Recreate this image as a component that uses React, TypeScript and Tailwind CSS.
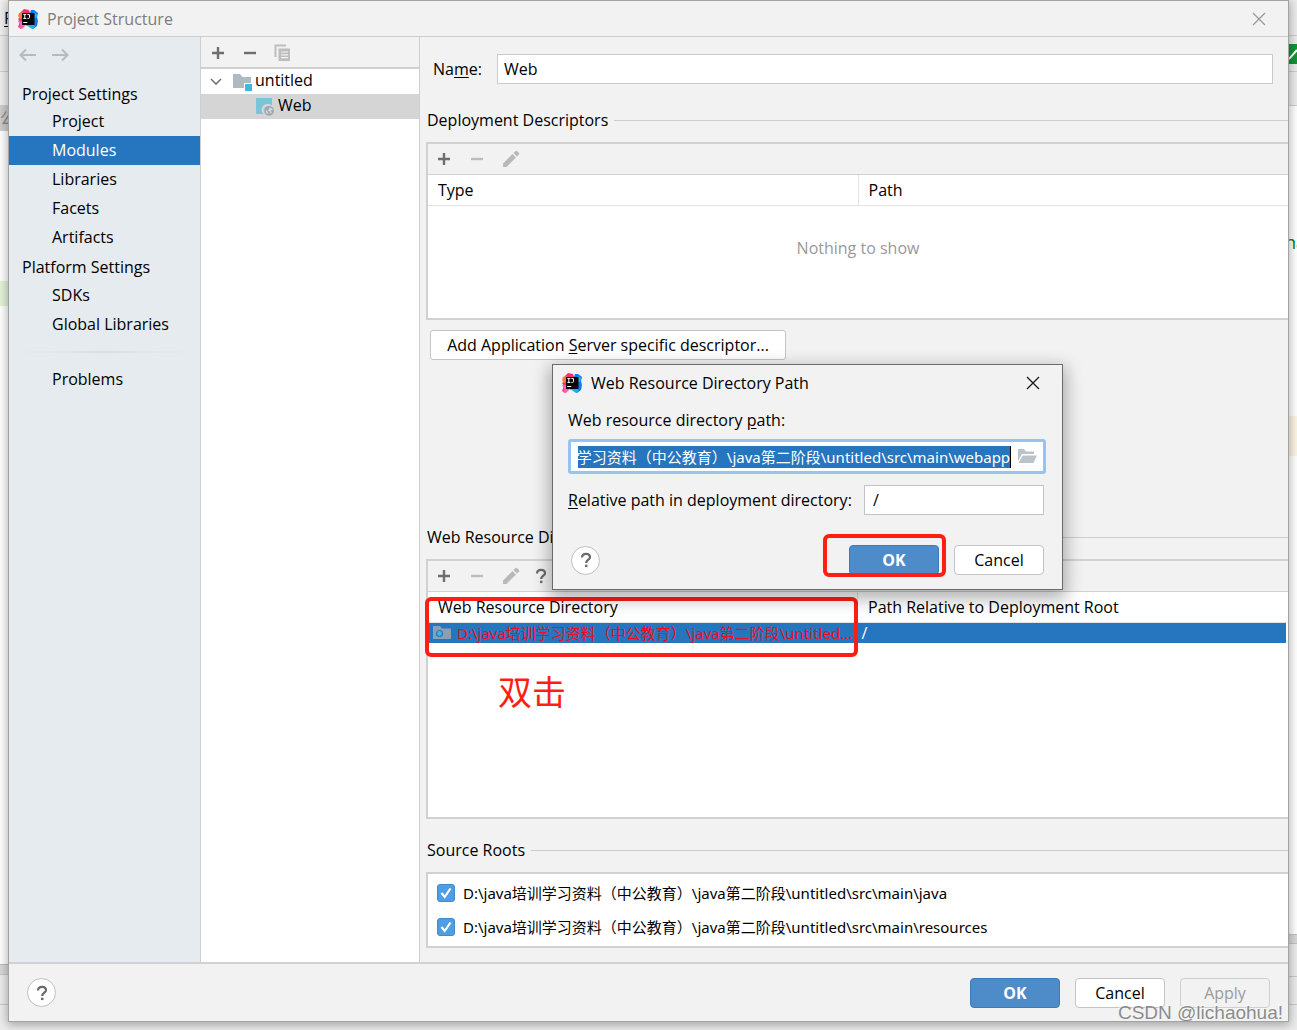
import { useEffect, useRef, type ReactNode } from "react";

const FONT = "font-['Open_Sans','Noto_Sans_CJK_SC',sans-serif]";
const PATH_FONT = "font-['Noto_Sans','Noto_Sans_CJK_SC',sans-serif]";

function Logo() {
  return (
    <svg width="20" height="20" viewBox="0 0 20 20" className="shrink-0" aria-hidden="true">
      <path d="M4 2l2-2 5 1 1 3-7 10-2 6-3-2 2-5-2-3 3-2-2-3z" fill="#fe2d72" />
      <path d="M1 4l4-1 1 5-4 2-2-3z" fill="#fb7a3c" />
      <path d="M0 12l4 0 3 5-3 3-3-1 1-3z" fill="#fd5fb0" />
      <path d="M13 1l3 0 4 3-1 4 1 4-1 5-4 3-4-3-5-1 3-3z" fill="#087cfa" />
      <path d="M16 3l3 2-1 4-2 0z" fill="#27b5f7" />
      <path d="M8 15.500l7 0 2 2-3 2.500-3-2z" fill="#14b4f1" />
      <rect x="4" y="4" width="12.500" height="12" fill="#0b0306" />
      <path d="M5.300 5.600h3M6.800 5.600v4M5.300 9.400h3M9.300 5.600h2.200v2.800q0 1-1 1h-1.200" stroke="#fff" strokeWidth="1" fill="none" />
      <path d="M5.300 13.500h4" stroke="#fff" strokeWidth="1" />
    </svg>
  );
}

function Plus() {
  return (
    <svg width="16" height="16" viewBox="0 0 16 16" aria-hidden="true">
      <path d="M8 2v12M2 8h12" stroke="#6e6e6e" strokeWidth="2.400" />
    </svg>
  );
}

function Minus({ off = false }: { off?: boolean }) {
  return (
    <svg width="16" height="16" viewBox="0 0 16 16" aria-hidden="true">
      <path d="M2 8h12" stroke={off ? "#bdbdbd" : "#6e6e6e"} strokeWidth="2.400" />
    </svg>
  );
}

function Pencil() {
  return (
    <svg width="18" height="18" viewBox="0 0 18 18" fill="#b9b9b9" aria-hidden="true">
      <path d="M1 13.500L10.500 4l3.500 3.500L4.500 17H1zM11.500 3l2-2q.7-.6 1.400 0l2.100 2.100q.6.7 0 1.400l-2 2z" />
    </svg>
  );
}

function Copy() {
  return (
    <svg width="18" height="18" viewBox="0 0 18 18" fill="none" aria-hidden="true">
      <path d="M1.500 13V1.500H12" stroke="#bdbdbd" strokeWidth="2" />
      <rect x="4.500" y="4.500" width="11.500" height="12.500" fill="#bdbdbd" />
      <path d="M7 8h7M7 10.800h7M7 13.600h7" stroke="#f2f2f2" strokeWidth="1.200" />
    </svg>
  );
}

function Question() {
  return (
    <svg width="16" height="16" viewBox="0 0 16 16" fill="none" aria-hidden="true">
      <path d="M4 5.500Q4 1.800 8 1.800T12 5.200C12 7.600 8.200 7.800 8.200 11" stroke="#6a6a6a" strokeWidth="2.200" />
      <rect x="7" y="12.700" width="2.400" height="2.400" fill="#6a6a6a" />
    </svg>
  );
}

function Close({ color }: { color: string }) {
  return (
    <svg width="14" height="14" viewBox="0 0 14 14" aria-hidden="true">
      <path d="M1 1l12 12M13 1L1 13" stroke={color} strokeWidth="1.300" />
    </svg>
  );
}

function Arrow({ right = false }: { right?: boolean }) {
  return (
    <svg width="17" height="14" viewBox="0 0 17 14" fill="none" aria-hidden="true">
      <path
        d={right ? "M0 7h15M10 1.500L15.500 7 10 12.500" : "M17 7H2M7 1.500L1.500 7 7 12.500"}
        stroke="#b8babc"
        strokeWidth="2"
      />
    </svg>
  );
}

function ModuleFolder() {
  return (
    <svg width="20" height="18" viewBox="0 0 20 18" aria-hidden="true">
      <path d="M0 1h7l2.500 3H18v6h-7v5H0z" fill="#afb9c1" />
      <rect x="12" y="11" width="7" height="7" fill="#40b6e0" />
    </svg>
  );
}

function WebFacet() {
  return (
    <svg width="19" height="18" viewBox="0 0 19 18" aria-hidden="true">
      <path d="M0 0h16v7.500A6 6 0 0 0 7.300 16H0z" fill="#7ac4dc" />
      <circle cx="13" cy="12.800" r="4.900" fill="#9aa7b0" />
      <path d="M9.500 11.500l2 2 1 2.800-2.400-1zM13 9.500l3 .8 1 2-1.500-.3-1 1.500 1.500.5-1.500 2-1-2.500-2-1.500 1.500-1z" fill="#d5d5d5" />
    </svg>
  );
}

function WebFolder() {
  return (
    <svg width="18" height="15" viewBox="0 0 18 15" className="shrink-0" aria-hidden="true">
      <path d="M0 1h7l2 2.500h9V14H0z" fill="#8a9fb1" />
      <circle cx="6.500" cy="8.500" r="3" fill="#40b6e0" stroke="#2675bf" strokeWidth="1.200" />
    </svg>
  );
}

function OpenFolder() {
  return (
    <svg width="19" height="15" viewBox="0 0 19 15" fill="#bcc3c8" aria-hidden="true">
      <path d="M0 0h6l2 2.500h8V5H4L0 12z" />
      <path d="M4.700 6.500H19L15.500 14H.5z" />
    </svg>
  );
}

function HelpButton() {
  return (
    <button aria-label="Help" className="flex size-[29px] items-center justify-center rounded-full border border-[#bfbfbf] bg-white">
      <Question />
    </button>
  );
}

function PushButton({ children, kind = "plain" }: { children: ReactNode; kind?: "plain" | "primary" | "off" }) {
  const look = {
    plain: "border-[#c4c4c4] bg-white text-black",
    primary: "border-[#3f7ab8] bg-[#4e8bc9] font-bold text-white",
    off: "border-[#cfcfcf] bg-[#f2f2f2] text-[#9b9b9b]",
  }[kind];
  return (
    <button disabled={kind === "off"} className={`flex h-[30px] w-[90px] items-center justify-center rounded border ${look}`}>
      {children}
    </button>
  );
}

function NavItem({ children, active = false }: { children: ReactNode; active?: boolean }) {
  return (
    <a
      href="#"
      className={`flex h-[29px] items-center pb-0.5 pl-[43px] ${active ? "bg-[#2675bf] text-white" : "text-black"}`}
    >
      {children}
    </a>
  );
}

function SectionTitle({ children }: { children: ReactNode }) {
  return (
    <div className="flex h-6 items-center gap-1.5 pl-px">
      <h2 className="whitespace-nowrap">{children}</h2>
      <div className="h-px flex-1 bg-[#cdcdcd]" />
    </div>
  );
}

function Toolbar({ help = false }: { help?: boolean }) {
  return (
    <div className="flex h-[31px] items-center gap-[17px] border-b border-[#d1d1d1] bg-[#f2f2f2] pl-2">
      <button aria-label="Add"><Plus /></button>
      <button aria-label="Remove" disabled><Minus off /></button>
      <button aria-label="Edit" disabled><Pencil /></button>
      {help && <button aria-label="Help" className="-ml-1"><Question /></button>}
    </div>
  );
}

function SourceRoot({ path }: { path: string }) {
  return (
    <label className={`flex h-[34px] items-center gap-2 text-[15px] ${PATH_FONT}`}>
      <span className="relative flex size-[18px]">
        <input type="checkbox" defaultChecked className="size-[18px] appearance-none rounded-[3px] border border-[#4389cd] bg-[#4f9ee3]" />
        <svg width="18" height="18" viewBox="0 0 18 18" className="pointer-events-none absolute inset-0" aria-hidden="true">
          <path d="M4.500 9l3.200 4L13.500 4.500" stroke="#fff" strokeWidth="2.200" fill="none" />
        </svg>
      </span>
      {path}
    </label>
  );
}

function PathDialog() {
  const path = useRef<HTMLInputElement>(null);
  useEffect(() => {
    if (path.current) path.current.scrollLeft = path.current.scrollWidth;
  }, []);
  return (
    <section
      role="dialog"
      aria-label="Web Resource Directory Path"
      className="absolute top-[363px] left-[543px] w-[511px] border border-[#6b6b6b] bg-[#f2f2f2] pb-[14px] shadow-[0_6px_16px_3px_rgba(0,0,0,0.3)]"
    >
      <div className="flex h-9 items-center pr-[22px] pl-[9px]">
        <Logo />
        <h2 className="flex-1 pl-[9px]">Web Resource Directory Path</h2>
        <button aria-label="Close"><Close color="#1a1a1a" /></button>
      </div>
      <div className="pr-4 pl-[15px]">
        <label htmlFor="res-path" className="flex h-[38px] items-center whitespace-pre">
          Web resource directory <u className="underline-offset-2">p</u>ath:
        </label>
        <div className="flex h-[35px] items-center rounded-[3px] border-3 border-[#97c3f3] bg-white pr-[6px] pl-[7px]">
          <input
            id="res-path"
            ref={path}
            defaultValue="D:\java培训学习资料（中公教育）\java第二阶段\untitled\src\main\webapp"
            className={`h-[22px] min-w-0 flex-1 border-r border-black bg-[#2675bf] text-[15px] text-white outline-none ${PATH_FONT}`}
          />
          <button aria-label="Browse" className="ml-[7px]"><OpenFolder /></button>
        </div>
        <div className="mt-[11px] flex items-center justify-between pr-[2px]">
          <label htmlFor="rel-path"><u className="underline-offset-2">R</u>elative path in deployment directory:</label>
          <input id="rel-path" defaultValue="/" className="h-[30px] w-[180px] border border-[#c4c4c4] bg-white px-2 outline-none" />
        </div>
        <div className="mt-[30px] flex items-center pr-[2px] pl-[3px]">
          <HelpButton />
          <div className="flex-1" />
          <div className="relative mr-[15px]">
            <PushButton kind="primary">OK</PushButton>
            <div className="pointer-events-none absolute -top-[11px] -right-[7px] -bottom-[2px] -left-[26px] rounded-md border-4 border-[#ff1f12]" />
          </div>
          <PushButton>Cancel</PushButton>
        </div>
      </div>
    </section>
  );
}

function LeftGutter() {
  return (
    <div className="flex w-2 shrink-0 flex-col overflow-hidden bg-white" aria-hidden="true">
      <div className="flex h-9 items-center overflow-hidden border-b border-[#cfcfcf] bg-[#f0f0f0] pl-1 underline underline-offset-2">F</div>
      <div className="h-9 border-b border-[#cfcfcf] bg-[#ececec]" />
      <div className="h-[33px] bg-[#efefef]" />
      <div className="flex h-[26px] items-center justify-start bg-[#cdcdcd] text-[#8a8a8a]">公</div>
      <div className="h-[150px]" />
      <div className="h-[25px] bg-[#e4f3d8]" />
      <div className="flex-1" />
      <div className="h-[10px] border-t border-[#bdbdbd] bg-[#d8d8d8]" />
      <div className="h-[31px] border-y border-[#c8c8c8] bg-[#ececec]" />
      <div className="h-[25px] bg-[#ececec]" />
    </div>
  );
}

function RightGutter() {
  return (
    <div className="flex w-2 shrink-0 flex-col overflow-hidden bg-white" aria-hidden="true">
      <div className="h-9 border-b border-[#cfcfcf] bg-[#ececec]" />
      <div className="h-9 border-b border-[#cfcfcf] bg-[#ececec] pt-2">
        <svg width="8" height="20" viewBox="0 0 8 20">
          <rect width="8" height="20" fill="#149436" />
          <path d="M0 15l8-9" stroke="#fff" strokeWidth="2" />
        </svg>
      </div>
      <div className="h-[34px] border-b border-[#cfcfcf] bg-[#ececec]" />
      <div className="flex h-[310px] items-center text-[18px] text-[#067d17]">
        <span className="-ml-1 pb-[38px]">na</span>
      </div>
      <div className="h-10 bg-[#fbf6e3]" />
      <div className="flex-1" />
      <div className="h-[10px] border-y border-[#c4c4c4] bg-[#d8d8d8]" />
      <div className="h-[33px] border-b border-[#c8c8c8] bg-[#ececec]" />
      <div className="h-[28px] border-b border-[#c8c8c8] bg-[#ececec]" />
      <div className="h-[25px] bg-[#ececec]" />
    </div>
  );
}

export default function App() {
  return (
    <div className={`relative flex min-h-screen bg-[#ececec] text-[16px] leading-5 text-black ${FONT}`}>
      <LeftGutter />
      <div className="relative mb-2 flex min-w-0 flex-1 flex-col border border-[#a3a3a3] bg-[#f2f2f2] shadow-[0_2px_9px_1px_rgba(0,0,0,0.3)]">
        <header className="flex h-9 shrink-0 items-center border-b border-[#cdcdcd] pr-[22px] pl-[9px]">
          <Logo />
          <h1 className="flex-1 pl-[9px] text-[#7d7d7d]">Project Structure</h1>
          <button aria-label="Close"><Close color="#999999" /></button>
        </header>

        <main className="flex flex-1">
          <nav className="w-48 shrink-0 border-r border-[#cfcfcf] bg-[#e6ebef]">
            <div className="flex h-[45px] items-center gap-4 pb-2.5 pl-[10px]">
              <button aria-label="Back"><Arrow /></button>
              <button aria-label="Forward"><Arrow right /></button>
            </div>
            <h2 className="flex h-[25px] items-center pb-0.5 pl-[13px]">Project Settings</h2>
            <NavItem>Project</NavItem>
            <NavItem active>Modules</NavItem>
            <NavItem>Libraries</NavItem>
            <NavItem>Facets</NavItem>
            <NavItem>Artifacts</NavItem>
            <h2 className="flex h-[29px] items-center pl-[13px]">Platform Settings</h2>
            <NavItem>SDKs</NavItem>
            <NavItem>Global Libraries</NavItem>
            <div className="mx-2 my-3 h-0.5 bg-linear-to-r from-transparent via-[#dcdfe2] to-transparent" />
            <NavItem>Problems</NavItem>
          </nav>

          <div className="w-[219px] shrink-0 border-r border-[#cfcfcf] bg-white">
            <div className="flex h-8 items-center gap-4 border-b-2 border-[#d1d1d1] bg-[#f2f2f2] pt-px pl-[9px]">
              <button aria-label="Add"><Plus /></button>
              <button aria-label="Remove"><Minus /></button>
              <button aria-label="Copy"><Copy /></button>
            </div>
            <ul>
              <li className="flex h-[25px] items-center pl-[9px]">
                <svg width="12" height="8" viewBox="0 0 12 8" className="mr-[11px]" aria-hidden="true">
                  <path d="M1 1l5 5 5-5" stroke="#767676" strokeWidth="1.600" fill="none" />
                </svg>
                <ModuleFolder />
                <span className="pb-[3px] pl-0.5">untitled</span>
              </li>
              <li className="flex h-[25px] items-center bg-[#d5d5d5] pl-[55px]">
                <WebFacet />
                <span className="pb-[3px] pl-[3px]">Web</span>
              </li>
            </ul>
          </div>

          <div className="flex min-w-0 flex-1 flex-col pl-1.5">
            <div className="mt-[17px] flex items-center pr-[15px] pl-[7px]">
              <label htmlFor="name" className="w-16">Na<u className="underline-offset-2">m</u>e:</label>
              <input id="name" defaultValue="Web" className="h-[30px] min-w-0 flex-1 border border-[#c9c9c9] bg-white px-[6px] outline-none" />
            </div>

            <div className="mt-6"><SectionTitle>Deployment Descriptors</SectionTitle></div>
            <div className="mt-[10px] flex h-[178px] flex-col border-2 border-r-0 border-[#d1d1d1] bg-white">
              <Toolbar />
              <table className="w-full table-fixed">
                <thead>
                  <tr className="h-[30px] border-b border-[#e3e3e3] text-left">
                    <th className="w-1/2 border-r border-[#e3e3e3] pl-[10px] font-normal">Type</th>
                    <th className="pl-[10px] font-normal">Path</th>
                  </tr>
                </thead>
              </table>
              <p className="pt-8 text-center text-[#999999]">Nothing to show</p>
            </div>
            <button className="mt-[10px] ml-1 flex h-[30px] w-[356px] items-center justify-center self-start rounded-[3px] border border-[#c4c4c4] bg-white whitespace-pre">
              Add Application <u className="underline-offset-2">S</u>erver specific descriptor...
            </button>

            <div className="mt-[165px]"><SectionTitle>Web Resource Directories</SectionTitle></div>
            <div className="relative mt-[10px] flex min-h-[260px] flex-1 flex-col border-2 border-r-0 border-[#d1d1d1] bg-white">
              <Toolbar help />
              <table className="w-full table-fixed">
                <thead>
                  <tr className="h-[30px] border-b border-[#e3e3e3] text-left">
                    <th className="w-1/2 border-r border-[#e3e3e3] pl-[10px] font-normal">Web Resource Directory</th>
                    <th className="pl-[10px] font-normal">Path Relative to Deployment Root</th>
                  </tr>
                </thead>
                <tbody>
                  <tr className="h-5 bg-[#2675bf]">
                    <td className={`pl-[5px] text-[15px] text-[#f20d1e] ${PATH_FONT}`}>
                      <div className="flex items-center gap-1.5 whitespace-nowrap">
                        <WebFolder />
                        D:\java培训学习资料（中公教育）\java第二阶段\untitled...
                      </div>
                    </td>
                    <td className="border-r-2 border-white pl-1 text-white">/</td>
                  </tr>
                </tbody>
              </table>
              <div className="pointer-events-none absolute top-9 right-1/2 -left-[3px] h-[60px] rounded-md border-4 border-[#ff1f12]" />
              <p className="pt-[30px] pl-[70px] font-['Noto_Sans_CJK_SC',sans-serif] text-[34px] leading-9 text-[#ff1f12]">双击</p>
            </div>

            <div className="mt-[19px]"><SectionTitle>Source Roots</SectionTitle></div>
            <div className="mt-[10px] mb-[14px] border-2 border-r-0 border-[#d1d1d1] bg-white py-[2px] pl-[9px]">
              <SourceRoot path="D:\java培训学习资料（中公教育）\java第二阶段\untitled\src\main\java" />
              <SourceRoot path="D:\java培训学习资料（中公教育）\java第二阶段\untitled\src\main\resources" />
            </div>
          </div>
        </main>

        <footer className="flex h-[59px] shrink-0 items-center gap-[15px] border-t-2 border-[#d1d1d1] pr-[18px] pl-[18px]">
          <HelpButton />
          <div className="flex-1" />
          <PushButton kind="primary">OK</PushButton>
          <PushButton>Cancel</PushButton>
          <PushButton kind="off">Apply</PushButton>
        </footer>

        <PathDialog />
      </div>
      <RightGutter />
      <div className="pointer-events-none absolute right-[14px] bottom-[5px] font-['Liberation_Sans',sans-serif] text-[19px] leading-6 text-[#8c8c8c] [text-shadow:-1px_-1px_0_#ffffffb0]">
        CSDN @lichaohua!
      </div>
    </div>
  );
}
